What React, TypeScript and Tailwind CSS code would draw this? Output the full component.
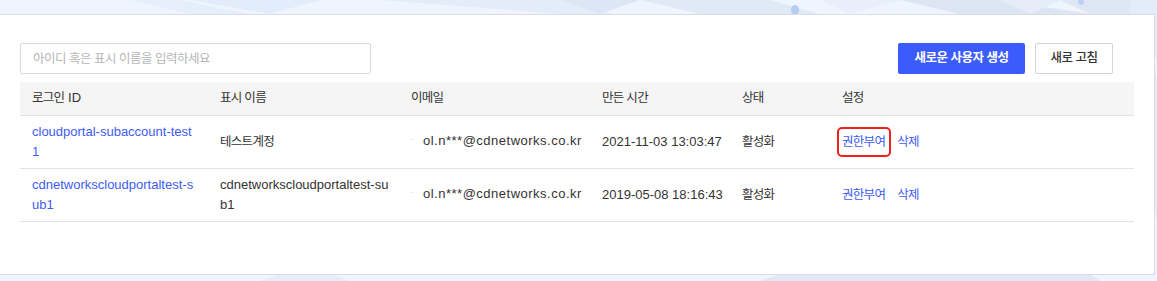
import React from 'react';

const font = { fontFamily: '"Liberation Sans", "Noto Sans CJK KR", sans-serif' };

type Row = {
  id: string[];
  name: string[];
  email: string;
  created: string;
  status: string;
  marked?: boolean;
};

const rows: Row[] = [
  {
    id: ['cloudportal-subaccount-test', '1'],
    name: ['테스트계정'],
    email: 'ol.n***@cdnetworks.co.kr',
    created: '2021-11-03 13:03:47',
    status: '활성화',
    marked: true,
  },
  {
    id: ['cdnetworkscloudportaltest-s', 'ub1'],
    name: ['cdnetworkscloudportaltest-su', 'b1'],
    email: 'ol.n***@cdnetworks.co.kr',
    created: '2019-05-08 18:16:43',
    status: '활성화',
  },
];

// hangul in the reference runs narrower than Noto CJK, so tighten it a bit
function Ko({ children }: { children: React.ReactNode }) {
  return <span className="text-[12.5px] tracking-[-0.7px]">{children}</span>;
}

function Backdrop() {
  return (
    <svg
      className="absolute inset-0 h-full w-full"
      viewBox="0 0 1157 281"
      preserveAspectRatio="none"
    >
      <rect width="1157" height="281" fill="#eef5fe" />
      <polygon points="130,0 190,14 250,14 180,0" fill="#e6eefb" />
      <polygon points="190,0 320,0 270,14" fill="#e3ecfa" />
      <polygon points="380,0 560,14 610,14 560,0" fill="#e4ecf9" />
      <polygon points="560,0 640,0 600,14" fill="#dde6f5" />
      <polygon points="640,0 770,0 820,14 700,14" fill="#e1e9f7" />
      <polygon points="820,0 900,0 850,14" fill="#e8effb" />
      <polygon points="900,0 1000,0 1090,14 960,14" fill="#dde5f3" />
      <polygon points="1000,0 1060,0 1030,14" fill="#e6edf9" />
      <polygon points="1060,0 1250,0 1230,14 1090,14" fill="#dfe7f5" />
      <polygon points="1130,0 1157,0 1157,60 1130,14" fill="#e4ecf9" />
      <polygon points="1154,60 1157,80 1157,220 1154,200" fill="#e3eaf6" />
      <polygon points="260,281 280,274 330,274 350,281" fill="#e6edf9" />
      <polygon points="780,274 1170,274 1160,281 760,281" fill="#e1e8f5" />
      <polygon points="1090,274 1157,274 1157,281 1100,281" fill="#eef5fe" />
      <ellipse cx="795" cy="10" rx="4" ry="5" fill="#b7cbf5" />
      <ellipse cx="1081" cy="2" rx="3" ry="3" fill="#bcd0f6" />
    </svg>
  );
}

function MaskedEmail({ value }: { value: string }) {
  return (
    <span className="whitespace-nowrap">
      <span className="inline-block w-[12px] text-[9px] text-[#d4d4d4]">¨</span>
      <span className="tracking-[0.5px]">{value}</span>
    </span>
  );
}

export default function App() {
  return (
    <div className="relative h-[281px] w-[1157px] overflow-hidden" style={font}>
      <Backdrop />
      <div className="relative mt-[14px] h-[261px] w-[1155px] border-y border-r border-[#d6dce8] bg-white pl-[20px] pr-[20px] pt-[28px]">
        <div className="flex items-center justify-between pr-[21px]">
          <input
            className="h-[31px] w-[351px] rounded-[2px] border border-[#d9d9d9] px-[12px] text-[12.5px] tracking-[-0.5px] text-[#333] outline-none placeholder:text-[#b5b5b5]"
            placeholder="아이디 혹은 표시 이름을 입력하세요"
          />
          <div className="flex items-center gap-[10px]">
            <button className="h-[31px] w-[127px] rounded-[2px] bg-[#3b5bfd] text-[12.5px] font-semibold tracking-[-0.5px] text-white">
              새로운 사용자 생성
            </button>
            <button className="h-[31px] w-[78px] rounded-[2px] border border-[#d4d4d4] bg-white text-[12.5px] font-medium tracking-[-0.5px] text-[#333]">
              새로 고침
            </button>
          </div>
        </div>

        <table className="mt-[8px] w-[1114px] table-fixed border-collapse text-left text-[13px] leading-[20px] text-[#333]">
          <colgroup>
            <col className="w-[188px]" />
            <col className="w-[191px]" />
            <col className="w-[191px]" />
            <col className="w-[140px]" />
            <col className="w-[100px]" />
            <col />
          </colgroup>
          <thead>
            <tr className="border-b border-[#e3e3e3] bg-[#f5f5f5]">
              <th className="h-[33px] px-[12px] py-0 font-normal">
                <Ko>로그인</Ko> ID
              </th>
              {['표시 이름', '이메일', '만든 시간', '상태', '설정'].map((h) => (
                <th key={h} className="h-[33px] px-[12px] py-0 font-normal">
                  <Ko>{h}</Ko>
                </th>
              ))}
            </tr>
          </thead>
          <tbody>
            {rows.map((r) => (
              <tr key={r.created} className="border-b border-[#e3e3e3]">
                <td className="h-[53px] px-[12px] py-[6px] text-[#3d5cf5]">
                  {r.id.map((l) => (
                    <div key={l} className="whitespace-nowrap">{l}</div>
                  ))}
                </td>
                <td className="px-[12px] py-[6px]">
                  {r.name.map((l) => (
                    <div key={l} className="whitespace-nowrap">
                      {/[가-힣]/.test(l) ? <Ko>{l}</Ko> : l}
                    </div>
                  ))}
                </td>
                <td className="px-[12px] py-[6px]">
                  <MaskedEmail value={r.email} />
                </td>
                <td className="px-[12px] py-[6px] whitespace-nowrap">{r.created}</td>
                <td className="px-[12px] py-[6px]">
                  <Ko>{r.status}</Ko>
                </td>
                <td className="px-[12px] py-[6px]">
                  <div className="flex items-center gap-[12px] text-[#3d5cf5]">
                    <span className="relative">
                      <Ko>권한부여</Ko>
                      {r.marked && (
                        <span className="absolute left-[-5px] top-[-5px] h-[30px] w-[54px] rounded-[5px] border-2 border-[#f21d1d]" />
                      )}
                    </span>
                    <Ko>삭제</Ko>
                  </div>
                </td>
              </tr>
            ))}
          </tbody>
        </table>
      </div>
    </div>
  );
}
